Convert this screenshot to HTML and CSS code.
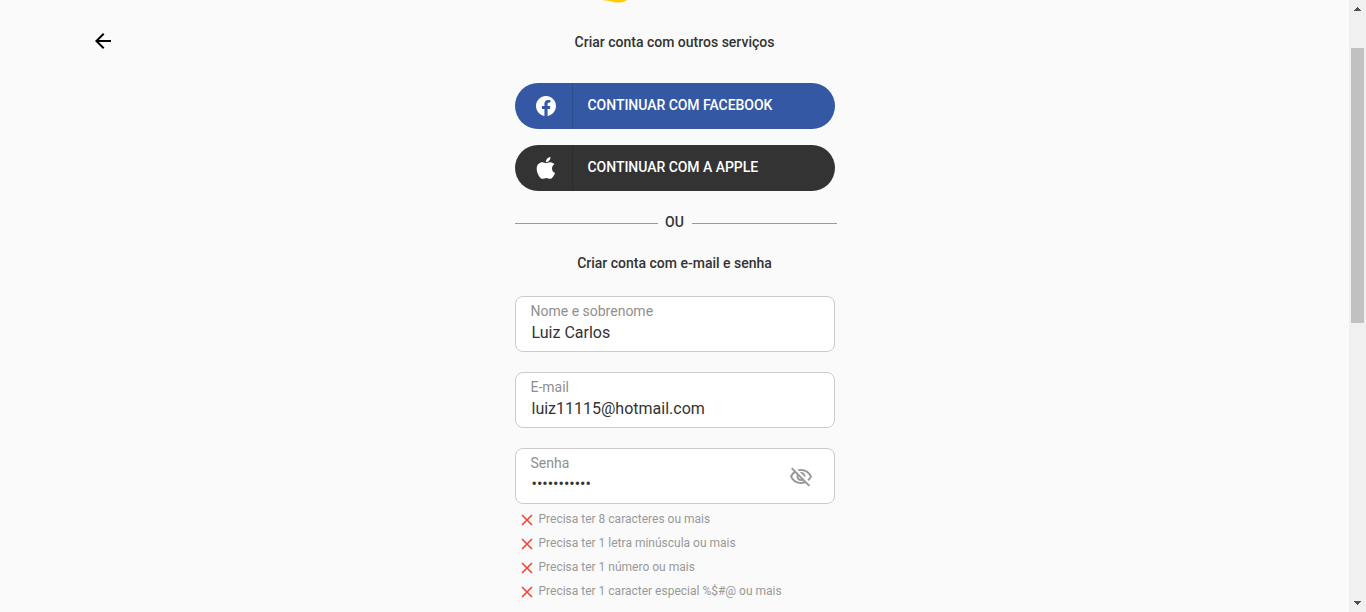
FILE: index.html
```html
<!DOCTYPE html>
<html lang="pt-BR">
<head>
<meta charset="utf-8">
<title>Criar conta</title>
<link rel="stylesheet" href="styles.css">
</head>
<body>
<div class="page">
  <aside class="side">
    <a class="back" aria-label="Voltar"><svg width="24" height="24" viewBox="0 0 24 24"><path d="M20 11H7.83l5.59-5.59L12 4l-8 8 8 8 1.41-1.41L7.83 13H20v-2z"/></svg></a>
  </aside>
  <main class="signup">
    <div class="logo"><svg width="36" height="3" viewBox="0 0 36 3"><path d="M3 0H28C24 3.1 16 3.3 12 1.2Z" fill="#ffcb05"/></svg></div>
    <h2 class="heading">Criar conta com outros serviços</h2>
    <button class="social facebook">
      <span class="social-icon"><svg width="20" height="20" viewBox="0 0 24 24"><path d="M24 12.073c0-6.627-5.373-12-12-12s-12 5.373-12 12c0 5.99 4.388 10.954 10.125 11.854v-8.385H7.078v-3.47h3.047V9.43c0-3.007 1.792-4.669 4.533-4.669 1.312 0 2.686.235 2.686.235v2.953H15.83c-1.491 0-1.956.925-1.956 1.874v2.25h3.328l-.532 3.47h-2.796v8.385C19.612 23.027 24 18.062 24 12.073z"/></svg></span>
      <span class="social-text">CONTINUAR COM FACEBOOK</span>
    </button>
    <button class="social apple">
      <span class="social-icon"><svg width="20" height="25" viewBox="-10 -8 410 512"><path d="M318.7 268.7c-.2-36.7 16.4-64.4 50-84.8-18.8-26.9-47.2-41.7-84.7-44.6-35.5-2.8-74.3 20.7-88.5 20.7-15 0-49.4-19.7-76.4-19.7C63.3 141.2 4 184.8 4 273.5q0 39.3 14.4 81.2c12.8 36.7 59 126.7 107.2 125.2 25.2-.6 43-17.9 75.8-17.9 31.8 0 48.3 17.9 76.4 17.9 48.6-.7 90.4-82.5 102.6-119.3-65.2-30.7-61.7-90-61.7-91.9zm-56.6-164.2c27.3-32.4 24.8-61.9 24-72.5-24.1 1.4-52 16.4-67.9 34.9-17.5 19.8-27.8 44.3-25.6 71.9 26.1 2 49.9-11.4 69.5-34.3z"/></svg></span>
      <span class="social-text">CONTINUAR COM A APPLE</span>
    </button>
    <div class="divider"><span class="line left"></span><span>OU</span><span class="line right"></span></div>
    <h2 class="heading second">Criar conta com e-mail e senha</h2>
    <form class="fields">
      <div class="field"><span class="label">Nome e sobrenome</span><span class="value">Luiz Carlos</span></div>
      <div class="field"><span class="label">E-mail</span><span class="value">luiz11115@hotmail.com</span></div>
      <div class="field password">
        <div><span class="label">Senha</span><span class="value dots">•••••••••••</span></div>
        <svg class="eye" width="24" height="24" viewBox="0 0 24 24"><path d="M12 6c3.79 0 7.17 2.13 8.82 5.5-.59 1.22-1.42 2.27-2.41 3.12l1.41 1.41c1.39-1.23 2.49-2.77 3.18-4.53C21.27 7.11 17 4 12 4c-1.27 0-2.49.2-3.64.57l1.65 1.65C10.66 6.09 11.32 6 12 6zm-1.07 1.14L13 9.21c.57.25 1.03.71 1.28 1.28l2.07 2.07c.08-.34.14-.7.14-1.07C16.5 9.01 14.48 7 12 7c-.37 0-.72.05-1.07.14zM2.01 3.87l2.68 2.68C3.06 7.83 1.77 9.53 1 11.5 2.73 15.89 7 19 12 19c1.52 0 2.98-.29 4.32-.82l3.42 3.42 1.41-1.41L3.42 2.45 2.01 3.87zm7.5 7.5l2.61 2.61c-.04.01-.08.02-.12.02-1.38 0-2.5-1.12-2.5-2.5 0-.05.01-.08.01-.13zm-3.4-3.4l1.75 1.75c-.23.55-.36 1.15-.36 1.78 0 2.48 2.02 4.5 4.5 4.5.63 0 1.23-.13 1.77-.36l.98.98c-.88.24-1.8.38-2.75.38-3.79 0-7.17-2.13-8.82-5.5.7-1.43 1.72-2.61 2.93-3.53z"/></svg>
      </div>
    </form>
    <ul class="rules">
      <li><svg width="12" height="12" viewBox="0 0 12 12"><path d="M1 1l10 10M11 1L1 11"/></svg>Precisa ter 8 caracteres ou mais</li>
      <li><svg width="12" height="12" viewBox="0 0 12 12"><path d="M1 1l10 10M11 1L1 11"/></svg>Precisa ter 1 letra minúscula ou mais</li>
      <li><svg width="12" height="12" viewBox="0 0 12 12"><path d="M1 1l10 10M11 1L1 11"/></svg>Precisa ter 1 número ou mais</li>
      <li><svg width="12" height="12" viewBox="0 0 12 12"><path d="M1 1l10 10M11 1L1 11"/></svg>Precisa ter 1 caracter especial %$#@ ou mais</li>
    </ul>
  </main>
  <div class="scrollbar">
    <svg width="7" height="4" viewBox="0 0 7 4" shape-rendering="crispEdges"><path d="M0 4h7v-1H6V2H5V1H4V0H3v1H2v1H1v1H0z"/></svg>
    <div class="thumb"></div>
    <svg class="down" width="7" height="4" viewBox="0 0 7 4" shape-rendering="crispEdges"><path d="M0 0h7v1H6v1H5v1H4v1H3V3H2V2H1V1H0z"/></svg>
  </div>
</div>
</body>
</html>
```
FILE: styles.css
```css
* { box-sizing: border-box; }
body { margin: 0; background: #fafafa; font-family: Roboto, "Liberation Sans", sans-serif; color: #333; overflow: hidden; }
svg { display: block; flex: none; }
.page { display: grid; grid-template-columns: 515px 320px 1fr 17px; height: 612px; overflow: hidden; }
.side { padding: 29px 0 0 91px; }
.back { display: block; width: 24px; }
.logo { height: 3px; padding-left: 84px; }
.heading { margin: 31px 0 0; width: 319px; font-size: 14px; line-height: 16px; font-weight: 500; text-align: center; }
.social { display: flex; align-items: center; width: 320px; height: 46px; padding: 0; border: 0; border-radius: 23px; color: #fff; font: 500 14px/16px Roboto, "Liberation Sans", sans-serif; }
.social svg { fill: #fff; }
.facebook { margin-top: 33px; background: #3458a3; }
.apple { margin-top: 16px; background: #333; }
.apple svg { margin-top: -1px; }
.social-icon { display: flex; align-items: center; justify-content: center; width: 58px; height: 46px; padding-left: 5px; border-right: 1px solid rgba(0, 0, 0, .12); }
.social-text { padding: 0 0 2px 14.5px; letter-spacing: -.04px; }
.divider { display: flex; align-items: center; gap: 7px; width: 322px; height: 16px; margin-top: 23px; font-size: 14px; line-height: 16px; font-weight: 500; }
.line { flex: 1; height: 1px; margin-top: 2px; background: #999; }
.line.left { flex: 0 0 143px; }
.line.right { margin-left: 1px; }
.second { margin-top: 25px; }
.fields { display: grid; gap: 20px; margin-top: 25px; }
.field { height: 56px; padding: 6px 15px 0 14.5px; border: 1px solid #ccc; border-radius: 8px; background: #fff; }
.label { display: block; font-size: 14px; line-height: 16px; color: #8f8f8f; }
.value { display: block; padding: 4px 0 0 1px; font-size: 16px; line-height: 20px; }
.value.dots { padding-top: 3px; }
.password { display: flex; justify-content: space-between; }
.eye { margin: 10px 6px 0 0; fill: #999; }
.rules { list-style: none; margin: 3px 0 0; padding: 0; }
.rules li { display: flex; align-items: center; gap: 5.5px; height: 24px; padding-left: 6px; font-size: 12px; line-height: 24px; color: #999; }
.rules svg { margin-top: 2px; fill: none; stroke: #f44336; stroke-width: 1.6; }
.scrollbar { grid-column: 4; display: flex; flex-direction: column; align-items: center; padding: 7px 0; background: #f0f0f0; }
.scrollbar svg { fill: #505050; }
.thumb { width: 13px; height: 275px; margin-top: 37px; background: #c1c1c1; }
.down { margin-top: auto; }
```
